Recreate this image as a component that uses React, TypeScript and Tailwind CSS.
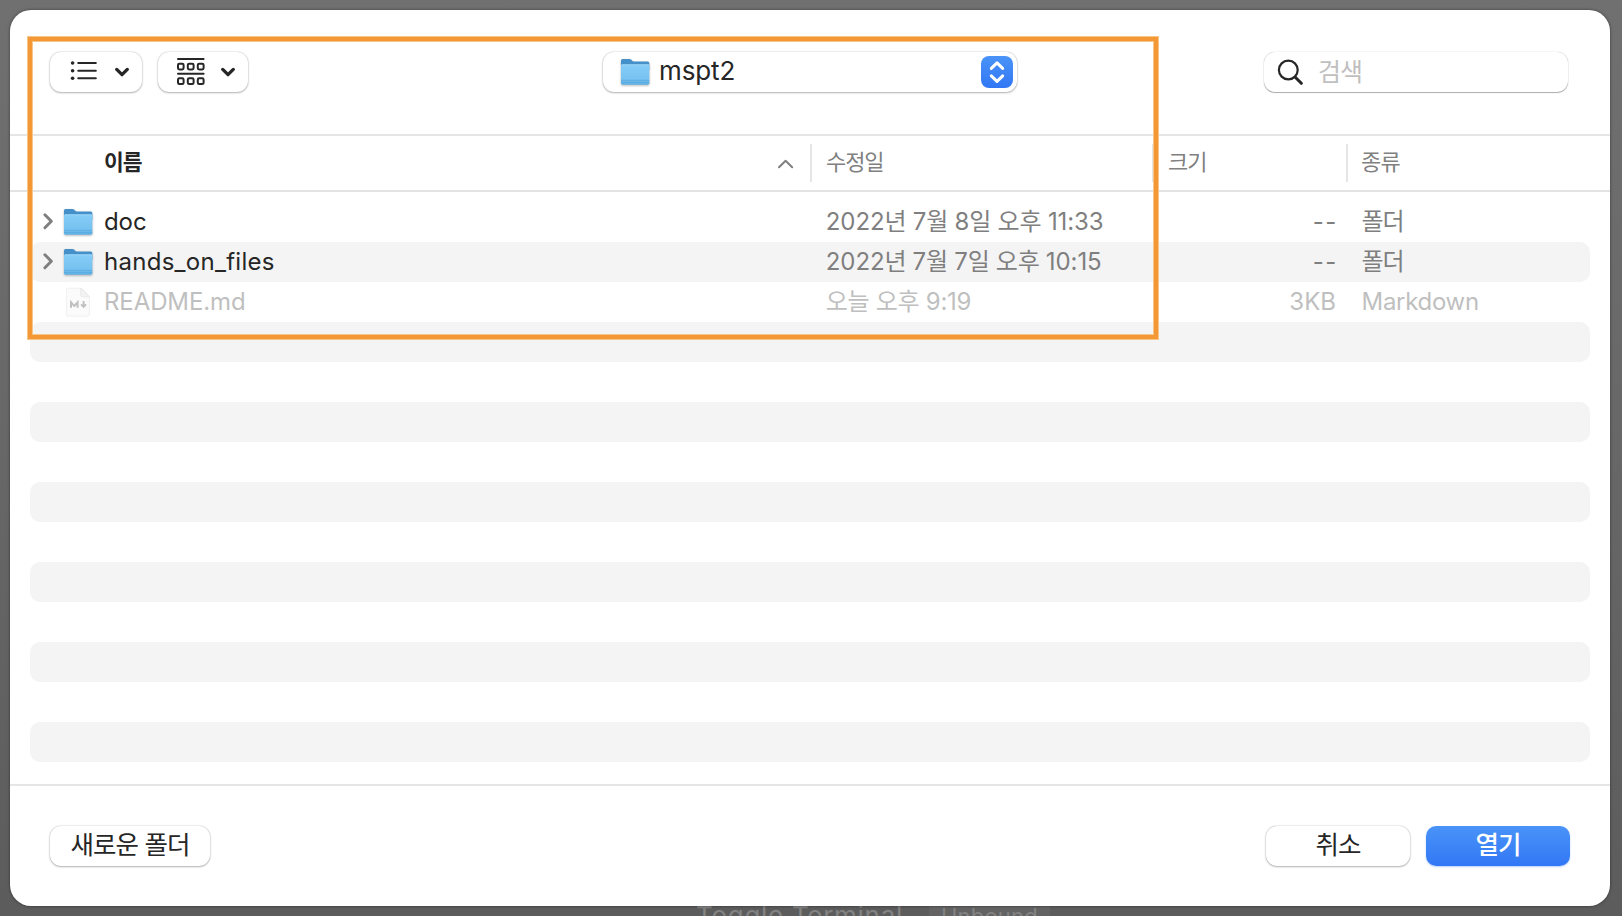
import type { ReactNode } from "react";

type Entry = {
  name: string;
  nameClass: string;
  date: string;
  dateClass: string;
  size: string;
  sizeClass: string;
  kind: string;
  kindClass: string;
  folder: boolean;
};

const entries: Entry[] = [
  {
    name: "doc",
    nameClass: "text-[#262626] tracking-[-0.1px]",
    date: "2022년 7월 8일 오후 11:33",
    dateClass: "tracking-[-0.08px] [word-spacing:-0.4px]",
    size: "--",
    sizeClass: "tracking-[1.6px] -mr-[2px]",
    kind: "폴더",
    kindClass: "tracking-[-1px]",
    folder: true,
  },
  {
    name: "hands_on_files",
    nameClass: "text-[#262626] tracking-[0.28px]",
    date: "2022년 7월 7일 오후 10:15",
    dateClass: "tracking-[-0.08px] [word-spacing:-0.6px]",
    size: "--",
    sizeClass: "tracking-[1.6px] -mr-[2px]",
    kind: "폴더",
    kindClass: "tracking-[-1px]",
    folder: true,
  },
  {
    name: "README.md",
    nameClass: "tracking-[-0.1px]",
    date: "오늘 오후 9:19",
    dateClass: "tracking-[-0.3px]",
    size: "3KB",
    sizeClass: "",
    kind: "Markdown",
    kindClass: "tracking-[-0.3px]",
    folder: false,
  },
];

const TOTAL_ROWS = 14;

function FolderIcon() {
  return (
    <svg width="32" height="32" viewBox="0 0 32 32" className="block drop-shadow-[0_1px_1px_rgba(0,0,0,0.28)]">
      <defs>
        <linearGradient id="folder-front" x1="0" y1="0" x2="0" y2="1">
          <stop offset="0" stopColor="#86cdf8" />
          <stop offset="0.75" stopColor="#76c1f0" />
          <stop offset="1" stopColor="#5fb0e4" />
        </linearGradient>
      </defs>
      <path d="M2 4.4Q2 2.9 3.5 2.9H10.4Q11.4 2.9 12.1 3.6L13.2 4.7Q13.9 5.4 14.9 5.4H28.8Q30.3 5.4 30.3 6.9V14H2Z" fill="#4590c8" />
      <path d="M2 9.8Q2 8.4 3.4 8.4H28.9Q30.3 8.4 30.3 9.8V27.3Q30.3 28.7 28.9 28.7H3.4Q2 28.7 2 27.3Z" fill="url(#folder-front)" />
      <path d="M2.6 8.8H29.8" stroke="#a5ddfb" strokeWidth="0.8" />
      <path d="M2 24.3H30.3M2 26.4H30.3" stroke="#57a8dc" strokeWidth="0.8" />
    </svg>
  );
}

function MarkdownIcon() {
  return (
    <svg width="32" height="32" viewBox="0 0 32 32" className="block drop-shadow-[0_0.5px_0.6px_rgba(0,0,0,0.14)]">
      <path d="M6 2.3H18.8L27.3 10.8V28.4Q27.3 30 25.7 30H6Q4.5 30 4.5 28.4V3.8Q4.5 2.3 6 2.3Z" fill="#fbfbfb" stroke="#f1f1f1" strokeWidth="0.6" />
      <path d="M18.8 2.3V9.2Q18.8 10.8 20.4 10.8H27.3Z" fill="#f3f3f3" stroke="#e0e0e0" strokeWidth="0.6" />
      <path d="M9 21.8V16.4L12.3 20L15.6 16.4V21.8" fill="none" stroke="#c0c0c0" strokeWidth="2" />
      <path d="M21.6 15V20.8M19.1 18.4L21.6 21L24.1 18.4" fill="none" stroke="#c0c0c0" strokeWidth="1.9" />
    </svg>
  );
}

function PushButton({ className, children }: { className: string; children: ReactNode }) {
  return (
    <button
      className={`flex h-10 items-start justify-center rounded-[11px] bg-white shadow-[0_0_1.5px_rgba(0,0,0,0.3),0_1px_2px_rgba(0,0,0,0.25)] ${className}`}
    >
      {children}
    </button>
  );
}

function MenuChevron() {
  return (
    <svg width="16" height="12" viewBox="0 0 16 12" fill="none" stroke="#262626" strokeWidth="3.3" strokeLinecap="round" strokeLinejoin="round">
      <path d="M2.7 3.4L8 8.7L13.3 3.4" />
    </svg>
  );
}

function Toolbar() {
  return (
    <div className="flex h-[124px] shrink-0 items-start px-10 pt-[42px]">
      <PushButton className="w-[92px]">
        <svg width="64" height="40" viewBox="0 0 64 40" className="shrink-0">
          <g fill="#262626">
            <circle cx="22.6" cy="11" r="1.8" />
            <circle cx="22.6" cy="18.7" r="1.8" />
            <circle cx="22.6" cy="26.3" r="1.8" />
          </g>
          <path d="M28.3 11H45.8M28.3 18.7H45.8M28.3 26.3H45.8" stroke="#262626" strokeWidth="2.1" strokeLinecap="round" />
        </svg>
        <span className="w-[28px] pt-[14px]">
          <MenuChevron />
        </span>
      </PushButton>
      <PushButton className="ml-4 w-[90px]">
        <svg width="62" height="40" viewBox="0 0 62 40" className="shrink-0" fill="none" stroke="#262626" strokeWidth="2">
          <path d="M20 7H45.6M20 21.8H45.6" strokeLinecap="round" />
          <rect x="20" y="11.7" width="5.6" height="5.8" rx="1.4" />
          <rect x="29.8" y="11.7" width="5.8" height="5.8" rx="1.4" />
          <rect x="39.8" y="11.7" width="5.8" height="5.8" rx="1.4" />
          <rect x="20" y="26.3" width="5.6" height="5.8" rx="1.4" />
          <rect x="29.8" y="26.3" width="5.8" height="5.8" rx="1.4" />
          <rect x="39.8" y="26.3" width="5.8" height="5.8" rx="1.4" />
        </svg>
        <span className="w-[28px] pt-[14px]">
          <MenuChevron />
        </span>
      </PushButton>

      <button className="ml-[355px] flex h-10 w-[414px] items-start rounded-[11px] bg-white pr-1 pl-[16px] shadow-[0_0_1.5px_rgba(0,0,0,0.3),0_1px_2px_rgba(0,0,0,0.25)]">
        <span className="pt-1">
          <FolderIcon />
        </span>
        <span className="mt-[3px] ml-[8px] text-[26px] leading-[31px] tracking-[-0.1px] text-[#262626]">mspt2</span>
        <span className="mt-1 ml-auto flex size-8 items-center justify-center rounded-[8px] bg-linear-to-b from-[#4a93f8] to-[#3277f5]">
          <svg width="32" height="32" viewBox="0 0 32 32" fill="none" stroke="#fff" strokeWidth="3" strokeLinecap="round" strokeLinejoin="round">
            <path d="M10.3 12.4L16 6.9L21.7 12.4M10.3 19.9L16 25.4L21.7 19.9" />
          </svg>
        </span>
      </button>

      <div className="ml-[247px] flex h-10 w-[304px] items-start rounded-[11px] bg-white shadow-[0_0_1px_rgba(0,0,0,0.35),0_1px_1px_rgba(0,0,0,0.3)]">
        <svg width="28" height="28" viewBox="0 0 28 28" className="mt-[5px] ml-[12px]" fill="none" stroke="#262626" strokeLinecap="round">
          <circle cx="12.3" cy="13" r="9.4" strokeWidth="2.2" />
          <path d="M19.3 20.2L25.3 26.3" strokeWidth="3" />
        </svg>
        <span className="mt-[5px] ml-[14px] text-[25px] leading-[31px] tracking-[-1px] text-[#bfbfbf]">검색</span>
      </div>
    </div>
  );
}

function HeaderRow() {
  return (
    <div className="flex h-[58px] shrink-0 items-start border-t-2 border-b-2 border-t-[#e5e5e5] border-b-[#e3e3e3] pl-[94px] text-[22px] leading-[26px] text-[#808080]">
      <div className="flex w-[706px] items-start pt-[13px]">
        <span className="text-[21.5px] font-bold tracking-[-1px] text-[#262626]">이름</span>
        <svg width="18" height="12" viewBox="0 0 18 12" className="mt-[9px] mr-[15px] ml-auto" fill="none" stroke="#808080" strokeWidth="2" strokeLinecap="round" strokeLinejoin="round">
          <path d="M2 9.2L8.6 2.7L15.2 9.2" />
        </svg>
      </div>
      <div className="mt-2 h-[38px] w-[342px] border-l-2 border-[#e5e5e5] pt-[5px] pl-[14px] tracking-[-1.1px]">수정일</div>
      <div className="mt-2 h-[38px] w-[194px] border-l-2 border-[#e5e5e5] pt-[5px] pl-[14px] tracking-[-0.9px]">크기</div>
      <div className="mt-2 h-[38px] border-l-2 border-[#e5e5e5] pt-[5px] pl-[13px] tracking-[-0.8px]">종류</div>
    </div>
  );
}

function FileRow({ entry, striped }: { entry?: Entry; striped: boolean }) {
  return (
    <div
      className={`flex h-10 shrink-0 items-start rounded-[10px] text-[24px] leading-[39px] ${striped ? "bg-[#f4f4f4]" : ""} ${
        entry && !entry.folder ? "text-[#bfbfbf]" : "text-[#7f7f7f]"
      }`}
    >
      {entry && (
        <>
          <div className="flex w-[780px] items-start">
            <span className="w-8 pt-[10px] pl-3">
              {entry.folder && (
                <svg width="14" height="19" viewBox="0 0 14 19" fill="none" stroke="#7f7f7f" strokeWidth="3" strokeLinecap="round" strokeLinejoin="round">
                  <path d="M2.9 2.8L9.3 9.3L2.9 15.8" />
                </svg>
              )}
            </span>
            <span className="pt-1">{entry.folder ? <FolderIcon /> : <MarkdownIcon />}</span>
            <span className={`ml-[10px] ${entry.nameClass}`}>{entry.name}</span>
          </div>
          <div className={`w-[342px] pl-[15.8px] ${entry.dateClass}`}>{entry.date}</div>
          <div className="flex w-[184px] justify-end">
            <span className={entry.sizeClass}>{entry.size}</span>
          </div>
          <div className={`pl-[25.5px] ${entry.kindClass}`}>{entry.kind}</div>
        </>
      )}
    </div>
  );
}

export default function App() {
  const rows = Array.from({ length: TOTAL_ROWS }, (_, i) => i);
  return (
    <div className="relative h-[916px] w-[1622px] overflow-hidden bg-linear-to-b from-[#707070] via-[#676767] to-[#5c5c5c] p-[10px] pr-3 font-['Inter','Noto_Sans_CJK_KR',sans-serif]">
      <div className="absolute top-[900px] left-[696px] flex items-start whitespace-nowrap text-[#828282]">
        <span className="text-[26px] leading-[31px] tracking-[0.7px]">Toggle Terminal</span>
        <span className="ml-[26px] h-8 bg-[#636363] px-[12px] pt-[3px] text-[22px] leading-[26px] tracking-[0.2px]">Unbound</span>
      </div>

      <div className="relative flex h-[896px] w-[1600px] flex-col overflow-hidden rounded-[21px] bg-white shadow-[0_0_3px_rgba(0,0,0,0.5)]">
        <Toolbar />
        <HeaderRow />
        <div className="flex h-[592px] shrink-0 flex-col px-5 pt-[10px]">
          {rows.map((i) => (
            <FileRow key={i} entry={entries[i]} striped={i % 2 === 1} />
          ))}
        </div>
        <div className="flex flex-1 items-start border-t-2 border-[#e5e5e5] px-10 pt-10 text-[25.5px] leading-[31px] text-[#262626]">
          <PushButton className="w-[160px] pt-[3px] tracking-[-0.9px]">새로운 폴더</PushButton>
          <PushButton className="ml-auto w-[144px] pt-[3px] tracking-[-1px]">취소</PushButton>
          <button className="ml-4 flex h-10 w-[144px] items-start justify-center rounded-[10px] bg-linear-to-b from-[#4a93f8] to-[#3277f5] pt-[3px] font-medium tracking-[-1px] text-white shadow-[0_1px_2px_rgba(50,119,245,0.35)]">
            열기
          </button>
        </div>
      </div>

      <div className="pointer-events-none absolute top-[36px] left-[27px] h-[304px] w-[1132px] border border-[#f8c588]">
        <div className="h-full border-4 border-[#f39834]">
          <div className="h-full border border-[#f8c588]" />
        </div>
      </div>
    </div>
  );
}
